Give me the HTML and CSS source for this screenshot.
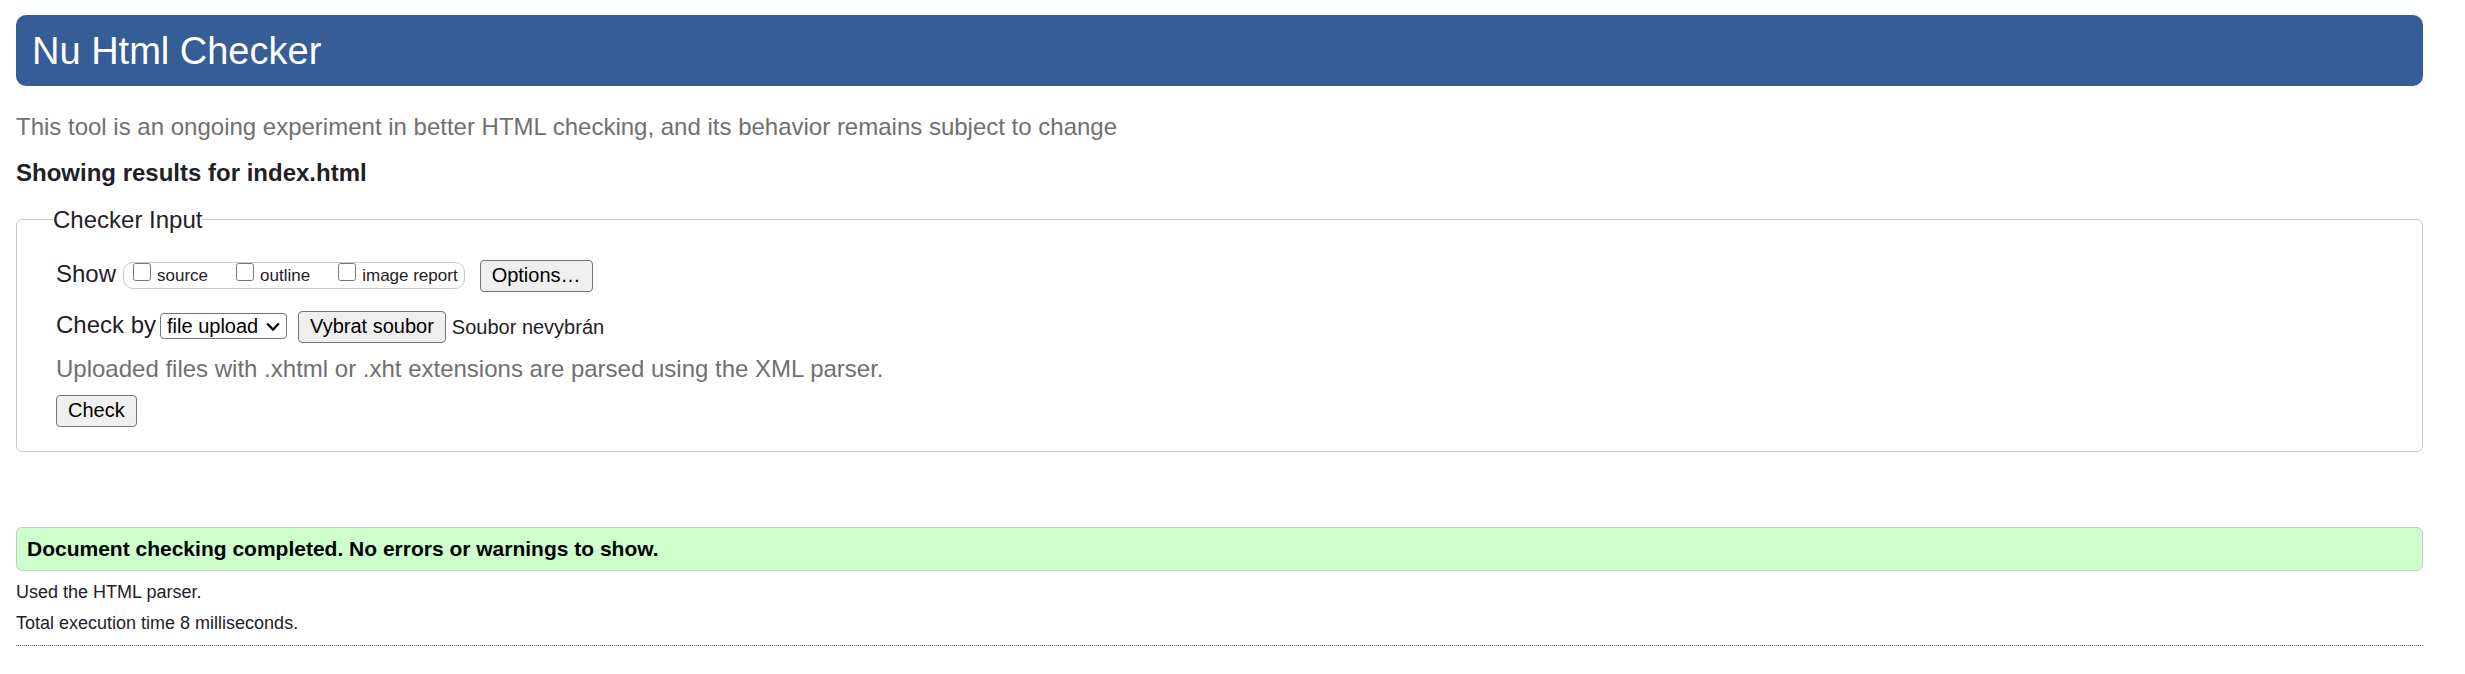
FILE: index.html
```html
<!DOCTYPE html>
<html lang="en">
<head>
<meta charset="utf-8">
<title>Nu Html Checker</title>
<link rel="stylesheet" href="styles.css">
</head>
<body>
<header class="banner"><h1 class="banner-title">Nu Html Checker</h1></header>
<main>
  <p class="note">This tool is an ongoing experiment in better HTML checking, and its behavior remains subject to change</p>
  <h2 class="results-title">Showing results for index.html</h2>
  <form>
    <fieldset class="checker">
      <legend class="checker-legend">Checker Input</legend>
      <div class="row show-row">
        <span>Show</span>
        <span class="checkboxes">
          <label class="option"><input class="box" type="checkbox" name="showsource">source</label>
          <label class="option"><input class="box" type="checkbox" name="showoutline">outline</label>
          <label class="option"><input class="box" type="checkbox" name="showimagereport">image report</label>
        </span>
        <button class="button options" type="button">Options…</button>
      </div>
      <div class="row input-row">
        <label for="docselect">Check by</label>
        <span class="select-wrap">
          <select class="select" id="docselect"><option>file upload</option></select>
          <svg class="chevron" width="14" height="10" viewBox="0 0 14 10" aria-hidden="true"><path d="M1.2 1.6 7 7.6l5.8-6" fill="none" stroke="#000" stroke-width="2.2"/></svg>
        </span>
        <button class="button" type="button">Vybrat soubor</button>
        <span class="file-name">Soubor nevybrán</span>
      </div>
      <p class="hint">Uploaded files with .xhtml or .xht extensions are parsed using the XML parser.</p>
      <button class="button" type="submit">Check</button>
    </fieldset>
  </form>
  <p class="success">Document checking completed. No errors or warnings to show.</p>
  <p class="detail">Used the HTML parser.</p>
  <p class="detail">Total execution time 8 milliseconds.</p>
  <hr class="rule">
</main>
</body>
</html>
```
FILE: styles.css
```css
* { box-sizing: border-box; }

body {
  margin: 15px 42px 15px 16px;
  background: #fff;
  color: #1f2126;
  font: 24px/28px "Liberation Sans", Arial, sans-serif;
}

p { margin: 0; }

.banner {
  padding: 15px 16px 14px;
  border-radius: 10px;
  background: #365d95;
  color: #fff;
}

.banner-title {
  margin: 0;
  font-size: 38px;
  font-weight: 400;
  line-height: 42px;
}

.note {
  margin-top: 27px;
  color: #707070;
}

.results-title {
  margin: 18px 0 17px;
  font-size: 24px;
  line-height: 28px;
}

.checker {
  min-width: 0;
  margin: 0;
  padding: 26px 39px 24px;
  border: 1px solid #c8c8c8;
  border-radius: 6px;
}

.checker-legend {
  margin-left: -3px;
  padding: 2px 0 0;
}

.row {
  display: flex;
  align-items: flex-start;
}

.show-row { margin-bottom: 19px; }

.checkboxes {
  display: flex;
  gap: 28px;
  margin: 2px 15px 0 7px;
  padding: 0 6px 0 9px;
  border: 1px solid #c8c8c8;
  border-radius: 10px;
  font-size: 17px;
  line-height: 25px;
}

.option {
  display: flex;
  align-items: flex-start;
  gap: 6px;
  line-height: 25px;
}

.box {
  width: 18px;
  height: 18px;
  margin: 0;
}

.button {
  height: 32px;
  padding: 0 11px 2px;
  border: 1px solid #767676;
  border-radius: 4px;
  background: #efefef;
  color: #000;
  font: 20px/28px "Liberation Sans", Arial, sans-serif;
}

.select-wrap {
  position: relative;
  display: flex;
  margin: 2px 11px 0 4px;
}

.select {
  appearance: none;
  height: 26px;
  padding: 0 27px 0 6px;
  border: 1px solid #767676;
  border-radius: 4px;
  background: #fff;
  color: #000;
  font: 20px/24px "Liberation Sans", Arial, sans-serif;
}

.chevron {
  position: absolute;
  top: 9px;
  right: 7px;
  pointer-events: none;
}

.file-name {
  margin-left: 6px;
  font-size: 20px;
  line-height: 32px;
}

.hint {
  margin: 12px 0;
  color: #707070;
}

.success {
  margin: 75px 0 9px;
  padding: 8px 10px;
  border: 1px solid #c8c8c8;
  border-radius: 6px;
  background: #cfc;
  color: #000;
  font-size: 21px;
  font-weight: 700;
  line-height: 26px;
}

.detail {
  margin-bottom: 7px;
  font-size: 18px;
  line-height: 24px;
}

.rule {
  margin: 10px 0 0;
  border: 0;
  border-top: 1px dotted #555;
}
```
